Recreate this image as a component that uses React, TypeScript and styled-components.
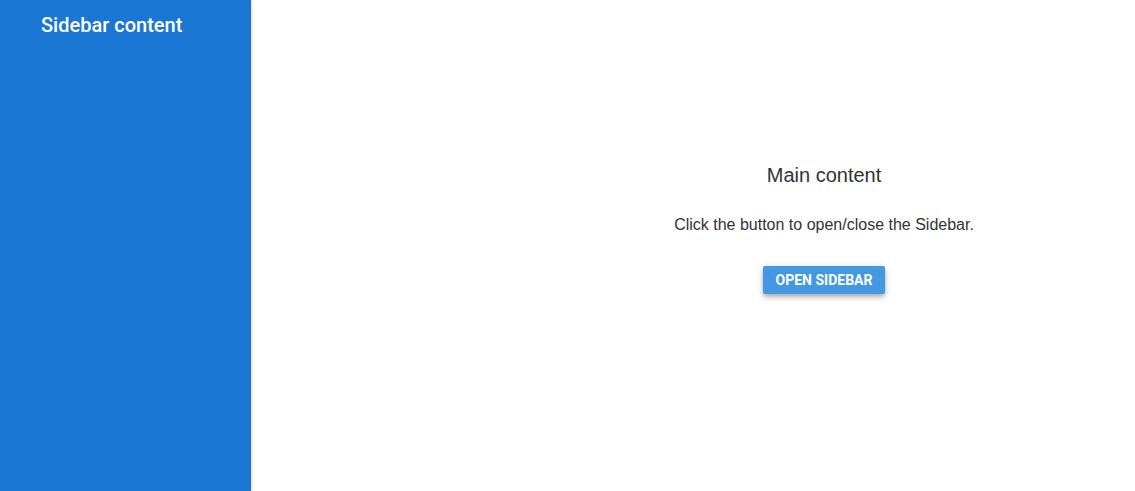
import React from 'react';
import styled, { createGlobalStyle } from 'styled-components';

const GlobalStyle = createGlobalStyle`
  html, body {
    margin: 0;
    padding: 0;
    background: #fff;
  }
  #root {
    height: 100vh;
  }
`;

const App = () => (
  <>
    <GlobalStyle />
    <StLayout>
      <StSidebar>
        <h2>Sidebar content</h2>
      </StSidebar>
      <StMain>
        <StTitle>Main content</StTitle>
        <StDescription>Click the button to open/close the Sidebar.</StDescription>
        <StButton type="button">Open Sidebar</StButton>
      </StMain>
    </StLayout>
  </>
);

export default App;

const StLayout = styled.div`
  display: flex;
  width: 100%;
  height: 100%;
  overflow: hidden;
`;

const StSidebar = styled.aside`
  flex: 0 0 251px;
  height: 100%;
  padding: 13px 0 0 41px;
  box-sizing: border-box;
  background-color: #1976d2;
  box-shadow: 1px 0 2px rgba(0, 0, 0, 0.15);

  & > h2 {
    margin: 0;
    font-family: Roboto, 'Liberation Sans', sans-serif;
    font-size: 20px;
    font-weight: 500;
    line-height: 24px;
    color: #fff;
  }
`;

const StMain = styled.main`
  flex: 1;
  display: flex;
  flex-direction: column;
  align-items: center;
  padding: 164px 0 0 262px;
  font-family: 'Liberation Sans', Arial, sans-serif;
  color: #333;
`;

const StTitle = styled.h1`
  margin: 0;
  font-size: 20px;
  font-weight: 400;
  line-height: 23px;
`;

const StDescription = styled.p`
  margin: 29px 0 0;
  font-size: 16px;
  line-height: 18px;
`;

const StButton = styled.button`
  margin-top: 32px;
  height: 28px;
  padding: 0 13px;
  border: none;
  border-radius: 2px;
  background-color: #4299e1;
  color: #fff;
  font-family: Roboto, 'Liberation Sans', sans-serif;
  font-size: 14px;
  font-weight: 700;
  text-transform: uppercase;
  box-shadow: 0 2px 4px -1px rgba(0, 0, 0, 0.2), 0 4px 5px 0 rgba(0, 0, 0, 0.14),
    0 1px 10px 0 rgba(0, 0, 0, 0.12);
  cursor: pointer;
`;
